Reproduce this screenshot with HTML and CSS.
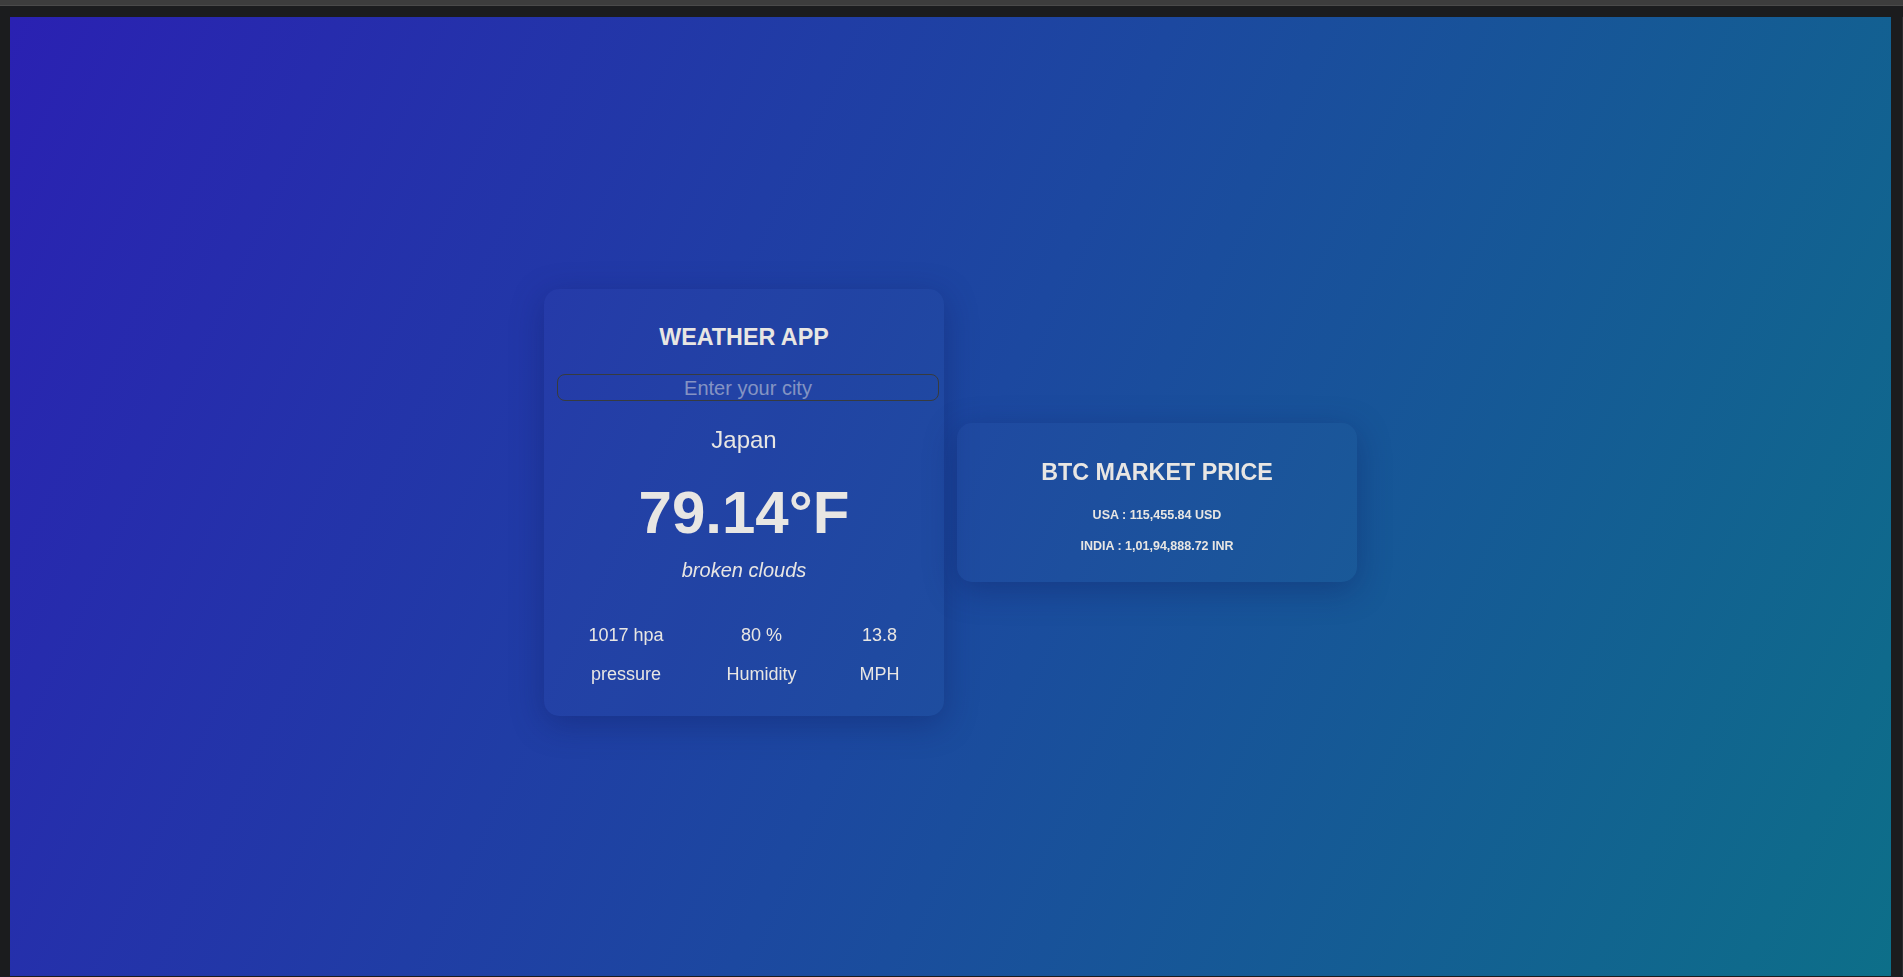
FILE: index.html
```html
<!DOCTYPE html>
<html lang="en">
<head>
<meta charset="utf-8">
<title>Weather App</title>
<link rel="stylesheet" href="styles.css">
</head>
<body>
  <div class="chrome-top"></div>
  <div class="window">
    <main class="viewport">
      <section class="card weather">
        <h2 class="title">WEATHER APP</h2>
        <input class="city-input" type="text" placeholder="Enter your city" autofocus>
        <div class="city">Japan</div>
        <div class="temp">79.14°F</div>
        <div class="desc">broken clouds</div>
        <div class="stats">
          <div class="stat">
            <div class="stat-value">1017 hpa</div>
            <div class="stat-label">pressure</div>
          </div>
          <div class="stat">
            <div class="stat-value">80 %</div>
            <div class="stat-label">Humidity</div>
          </div>
          <div class="stat">
            <div class="stat-value">13.8</div>
            <div class="stat-label">MPH</div>
          </div>
        </div>
      </section>
      <section class="card btc">
        <h2 class="title">BTC MARKET PRICE</h2>
        <p class="price first">USA : 115,455.84 USD</p>
        <p class="price">INDIA : 1,01,94,888.72 INR</p>
      </section>
    </main>
    <div class="scrollbar"></div>
  </div>
</body>
</html>
```
FILE: styles.css
```css
* { box-sizing: border-box; }

html, body {
  margin: 0;
  padding: 0;
}

body {
  width: 1903px;
  height: 977px;
  background: #1b1c1e;
  font-family: "Liberation Sans", Arial, sans-serif;
  color: #e8e6e3;
  overflow: hidden;
}

.chrome-top {
  height: 6px;
  background: #3d3d3d;
  border-bottom: 1px solid #4a4a4a;
}

.window {
  display: flex;
  padding: 11px 0 1px 10px;
}

.viewport {
  width: 1881px;
  height: 959px;
  padding-top: 12px;
  display: flex;
  justify-content: center;
  align-items: center;
  gap: 13px;
  background: linear-gradient(115deg, #2a21b2 0%, #1c48a0 50%, #0d6f89 100%);
}

.scrollbar {
  flex: 1;
  border-right: 1px solid #2a2b2e;
}

.card {
  width: 400px;
  border-radius: 15px;
  background: rgba(255, 255, 255, 0.015);
  box-shadow: 0 8px 32px rgba(15, 25, 90, 0.35);
  text-align: center;
}

.weather {
  padding: 34px 13px 30px;
  display: flex;
  flex-direction: column;
  align-items: stretch;
}

.title {
  margin: 0;
  font-size: 23.3px;
  line-height: 28px;
  font-weight: bold;
}

.city-input {
  margin-top: 23px;
  width: 382px;
  height: 27px;
  padding: 1px 2px 0;
  border: 1px solid #373b3e;
  border-radius: 8px;
  background: transparent;
  color: #e8e6e3;
  font-family: "Liberation Sans", Arial, sans-serif;
  font-size: 20px;
  line-height: 24px;
  text-align: center;
  outline: none;
  caret-color: #e8e6e3;
}

.city-input::placeholder {
  color: rgba(232, 230, 227, 0.5);
}

.city {
  margin-top: 25px;
  font-size: 24px;
  line-height: 28px;
}

.temp {
  margin-top: 24px;
  font-size: 60px;
  line-height: 70px;
  font-weight: bold;
}

.desc {
  margin-top: 10px;
  font-size: 20px;
  line-height: 24px;
  font-style: italic;
}

.stats {
  margin-top: 41px;
  display: flex;
  justify-content: space-around;
}

.stat-value,
.stat-label {
  font-size: 18px;
  line-height: 24px;
  white-space: nowrap;
}

.stat-label {
  margin-top: 15px;
}

.btc {
  padding: 35px 0 28px;
}

.price {
  margin: 15px 0 0;
  font-size: 12.5px;
  line-height: 16px;
  font-weight: bold;
}

.price.first {
  margin-top: 21px;
}
```
